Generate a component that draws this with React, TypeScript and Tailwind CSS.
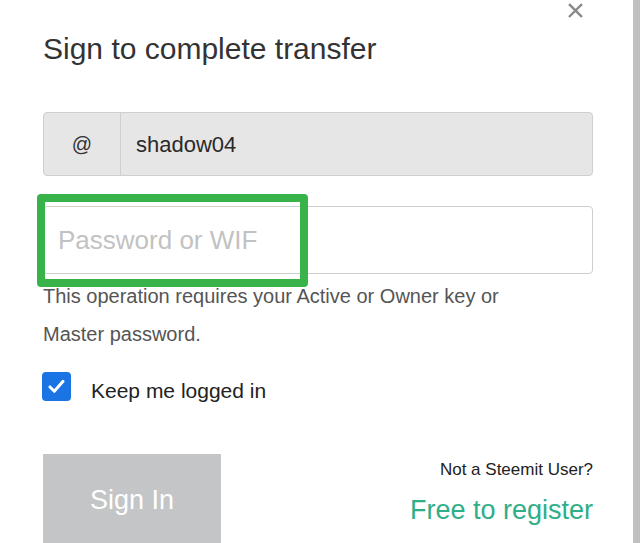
import React from 'react';

const font = { fontFamily: '"Liberation Sans", Arial, sans-serif' };

function CloseIcon() {
  return (
    <svg viewBox="0 0 16 16" className="w-[15px] h-[15px]" aria-hidden="true">
      <path d="M2 2 L14 14 M14 2 L2 14" stroke="#8a8a8a" strokeWidth="2.6" strokeLinecap="square" />
    </svg>
  );
}

function CheckBox() {
  return (
    <span className="flex h-[29px] w-[29px] shrink-0 items-center justify-center rounded-[4px] bg-[#1b74e4]">
      <svg viewBox="0 0 24 24" className="h-[21px] w-[21px]" aria-hidden="true">
        <path d="M4.5 12.5 L9.5 17.5 L19.5 6" fill="none" stroke="#fff" strokeWidth="3.4" strokeLinecap="round" strokeLinejoin="round" />
      </svg>
    </span>
  );
}

export default function App() {
  return (
    <div className="flex min-h-screen bg-white" style={font}>
      <div className="relative flex-1 pl-[43px] pr-[40px] pt-[31px]">
        {/* close */}
        <button className="absolute right-[50px] top-[3px]" aria-label="Close">
          <CloseIcon />
        </button>

        <h1 className="text-[30px] leading-[36px] font-normal text-[#333]">Sign to complete transfer</h1>

        {/* username group */}
        <div className="mt-[45px] flex h-[64px] rounded-[4px] border border-[#cfcfcf] bg-[#e6e6e6]">
          <span className="flex w-[77px] items-center justify-center border-r border-[#cfcfcf] text-[20px] text-[#333]">@</span>
          <span className="flex flex-1 items-center pl-[15px] text-[22px] text-[#2a2a2a]">shadow04</span>
        </div>

        {/* password */}
        <div className="relative mt-[30px]">
          <input
            type="password"
            placeholder="Password or WIF"
            className="h-[68px] w-full rounded-[4px] border border-[#cfcfcf] bg-white pl-[14px] text-[26px] outline-none placeholder:text-[#c2c2c2]"
          />
          {/* highlight annotation */}
          <div className="pointer-events-none absolute left-[-6px] top-[-12px] h-[93px] w-[271px] rounded-[4px] border-[8px] border-[#37b34a]" />
        </div>

        <p className="mt-[3px] max-w-[500px] text-[20px] leading-[38px] text-[#555]">
          This operation requires your Active or Owner key or Master password.
        </p>

        <label className="mt-[19px] flex h-[29px] items-center gap-[20px] ml-[-1px]">
          <CheckBox />
          <span className="translate-y-[4px] text-[21px] leading-[29px] text-[#222]">Keep me logged in</span>
        </label>

        <div className="mt-[53px] flex items-start justify-between">
          <button className="h-[92px] w-[178px] bg-[#c4c5c7] text-[27px] text-white">Sign In</button>
          <div className="pt-[4px] text-right">
            <div className="text-[17px] leading-[24px] text-[#222]">Not a Steemit User?</div>
            <a className="mt-[12px] block text-[27px] leading-[32px] text-[#2fae88]">Free to register</a>
          </div>
        </div>
      </div>
      <div className="w-[7px] shrink-0 bg-[#c0c0c0]" />
    </div>
  );
}
